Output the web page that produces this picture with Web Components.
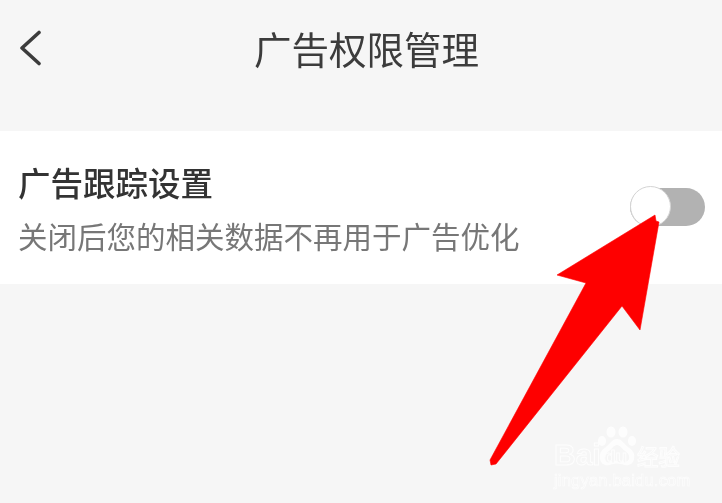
<!DOCTYPE html>
<html lang="zh">
<head>
<meta charset="utf-8">
<title>广告权限管理</title>
<style>
  html, body { margin: 0; height: 100%; }
  body {
    width: 722px;
    height: 503px;
    overflow: hidden;
    position: relative;
    background: #f6f6f6;
    font-family: "Noto Sans CJK SC", "Liberation Sans", sans-serif;
  }
</style>
</head>
<body>
  <nav-bar>广告权限管理</nav-bar>
  <setting-row>
    <span slot="title">广告跟踪设置</span>
    <span slot="desc">关闭后您的相关数据不再用于广告优化</span>
    <toggle-switch slot="control"></toggle-switch>
  </setting-row>
  <baidu-mark></baidu-mark>
  <red-arrow></red-arrow>

<script>
class NavBar extends HTMLElement {
  constructor() {
    super();
    this.attachShadow({mode: "open"}).innerHTML = `
    <style>
      :host { display: grid; grid-template-columns: 234px auto 1fr; align-items: center; height: 96px; margin-bottom: 35px; padding: 0 20px; box-sizing: border-box; color: #3c3c3c; }
      svg { display: block; width: 24px; height: 38px; margin-top: -1px; filter: blur(.5px); }
      .title { font-size: 37.5px; line-height: 96px; font-weight: 400; filter: blur(.6px); }
    </style>
    <svg viewBox="0 0 24 38"><path d="M19 3.500 L2 19 L19 34.500" fill="none" stroke="#3c3c3c" stroke-width="3.600" stroke-linecap="round" stroke-linejoin="round"/></svg>
    <div class="title"><slot></slot></div>
    <div></div>`;
  }
}

class SettingRow extends HTMLElement {
  constructor() {
    super();
    this.attachShadow({mode: "open"}).innerHTML = `
    <style>
      :host { display: flex; align-items: center; justify-content: space-between; height: 153px; background: #fff; padding: 0 17px 0 18px; box-sizing: border-box; }
      .text { display: flex; flex-direction: column; gap: 11px; margin-top: -1px; }
      .title { font-size: 32.5px; line-height: 44px; color: #333; font-weight: 500; filter: blur(.6px); }
      .desc { font-size: 29.5px; line-height: 40px; color: #777; font-weight: 400; filter: blur(.6px); }
    </style>
    <div class="text">
      <div class="title"><slot name="title"></slot></div>
      <div class="desc"><slot name="desc"></slot></div>
    </div>
    <slot name="control"></slot>`;
  }
}

class ToggleSwitch extends HTMLElement {
  constructor() {
    super();
    this.attachShadow({mode: "open"}).innerHTML = `
    <style>
      :host { display: block; position: relative; width: 75px; height: 38px; margin-top: -1px; background: #b2b2b2; border-radius: 19px; }
      .knob { position: absolute; left: 0; top: -2px; width: 41px; height: 41px; box-sizing: border-box; border-radius: 50%; background: #fff; border: 1px solid #d4d4d4; }
    </style>
    <div class="knob"></div>`;
  }
}

class BaiduMark extends HTMLElement {
  constructor() {
    super();
    this.attachShadow({mode: "open"}).innerHTML = `
    <style>
      :host { display: block; position: absolute; left: 552px; top: 424px; width: 170px; height: 74px; color: #f6f6f6; opacity: .8; font-family: "Liberation Sans", "Noto Sans CJK SC", sans-serif; filter: blur(.5px); }
      svg { position: absolute; left: 44px; top: 2px; width: 42px; height: 42px; }
      span { position: absolute; white-space: nowrap; -webkit-text-stroke: 1px #fff; }
      .bai { left: 2px; top: 16px; font-size: 30px; line-height: 30px; font-weight: 700; }
      .du { left: 52px; top: 23px; font-size: 19px; line-height: 20px; font-weight: 700; }
      .jy { left: 85px; top: 19px; font-size: 21.5px; line-height: 26px; font-family: "Noto Sans CJK SC", sans-serif; }
      .url { left: 2px; top: 47px; font-size: 16.5px; line-height: 18px; letter-spacing: .2px; -webkit-text-stroke: .6px #fff; }
    </style>
    <svg viewBox="0 0 42 42" fill="#fff">
      <ellipse cx="6" cy="15" rx="4" ry="5"/>
      <ellipse cx="15" cy="6" rx="4.500" ry="5.500"/>
      <ellipse cx="27" cy="6" rx="4.500" ry="5.500"/>
      <ellipse cx="36" cy="15" rx="4" ry="5"/>
      <path d="M21 13c-5 0-7 5-11 8-5 3-7 7-6 12 1 5 5 7 9 6 4-1 6-1.500 8-1.500s4 .5 8 1.500c4 1 8-1 9-6 1-5-1-9-6-12-4-3-6-8-11-8z"/>
      <path d="M21 19c-3 0-5 4-8 6-3 2-5 5-4 8 1 2 3 3 5 2.500 3-.5 5-1 7-1s4 .5 7 1c2 .5 4-.5 5-2.500 1-3-1-6-4-8-3-2-5-6-8-6z" fill="#f6f6f6"/>
    </svg>
    <span class="bai">Bai</span>
    <span class="du">du</span>
    <span class="jy">经验</span>
    <span class="url">jingyan.baidu.com</span>`;
  }
}

class RedArrow extends HTMLElement {
  constructor() {
    super();
    this.attachShadow({mode: "open"}).innerHTML = `
    <style>
      :host { display: block; position: absolute; inset: 0; pointer-events: none; }
      svg { display: block; width: 722px; height: 503px; }
    </style>
    <svg viewBox="0 0 722 503">
      <polygon points="557,275 655,215 656,221 659,222 640,330 622,306 496,464 491,465 490,460 586,283" fill="#fe0000" stroke="#f00" stroke-width=".6" stroke-linejoin="round"/>
    </svg>`;
  }
}

customElements.define("nav-bar", NavBar);
customElements.define("setting-row", SettingRow);
customElements.define("toggle-switch", ToggleSwitch);
customElements.define("baidu-mark", BaiduMark);
customElements.define("red-arrow", RedArrow);
</script>
</body>
</html>
